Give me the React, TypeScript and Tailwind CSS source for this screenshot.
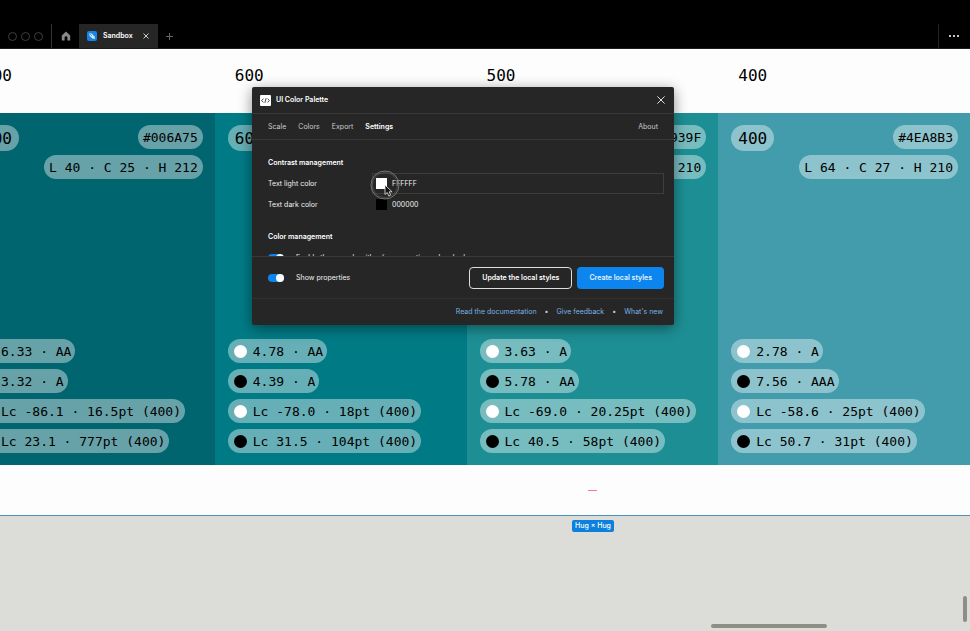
import { ReactNode } from "react";

type Shade = {
  name: string;
  hex: string;
  lch: string;
  color: string;
  wcagLight: string;
  wcagDark: string;
  apcaLight: string;
  apcaDark: string;
};

const shades: Shade[] = [
  {
    name: "700",
    hex: "#006A75",
    lch: "L 40 · C 25 · H 212",
    color: "bg-[#00656f]",
    wcagLight: "6.33 · AA",
    wcagDark: "3.32 · A",
    apcaLight: "Lc -86.1 · 16.5pt (400)",
    apcaDark: "Lc 23.1 · 777pt (400)",
  },
  {
    name: "600",
    hex: "#007F8B",
    lch: "L 48 · C 28 · H 212",
    color: "bg-[#007b86]",
    wcagLight: "4.78 · AA",
    wcagDark: "4.39 · A",
    apcaLight: "Lc -78.0 · 18pt (400)",
    apcaDark: "Lc 31.5 · 104pt (400)",
  },
  {
    name: "500",
    hex: "#18939F",
    lch: "L 56 · C 29 · H 210",
    color: "bg-[#1d8f94]",
    wcagLight: "3.63 · A",
    wcagDark: "5.78 · AA",
    apcaLight: "Lc -69.0 · 20.25pt (400)",
    apcaDark: "Lc 40.5 · 58pt (400)",
  },
  {
    name: "400",
    hex: "#4EA8B3",
    lch: "L 64 · C 27 · H 210",
    color: "bg-[#429cab]",
    wcagLight: "2.78 · A",
    wcagDark: "7.56 · AAA",
    apcaLight: "Lc -58.6 · 25pt (400)",
    apcaDark: "Lc 50.7 · 31pt (400)",
  },
];

function Pill({ dot, children }: { dot?: "light" | "dark"; children: ReactNode }) {
  return (
    <div className={`flex h-6 items-center gap-1.5 rounded-full bg-white/40 text-[13px] leading-6 whitespace-pre ${dot ? "pr-1 pl-1.5" : "px-[5px]"}`}>
      {dot && (
        <span className={`size-[13px] rounded-full ${dot === "light" ? "bg-white" : "bg-black"}`} />
      )}
      <span className="pt-0.5">{children}</span>
    </div>
  );
}

function ShadeColumn({ shade }: { shade: Shade }) {
  return (
    <section className="min-w-0">
      <h2 className="h-16 bg-[#fdfdfd] px-5 pt-4 text-base leading-[22px]">{shade.name}</h2>
      <div className={`flex h-[352px] flex-col justify-between p-3 pl-[13px] ${shade.color}`}>
        <div className="flex items-start justify-between">
          <div className="h-[26px] rounded-full bg-white/40 px-[7px] text-base leading-7">{shade.name}</div>
          <div className="-ml-8 flex flex-col items-end gap-1.5">
            <Pill>{shade.hex}</Pill>
            <Pill>{shade.lch}</Pill>
          </div>
        </div>
        <div className="flex flex-col items-start gap-1.5">
          <Pill dot="light">{shade.wcagLight}</Pill>
          <Pill dot="dark">{shade.wcagDark}</Pill>
          <Pill dot="light">{shade.apcaLight}</Pill>
          <Pill dot="dark">{shade.apcaDark}</Pill>
        </div>
      </div>
    </section>
  );
}

function TitleBar() {
  return (
    <header className="flex h-[49px] items-end border-b border-[#1c1c1c] bg-black text-[#e8e8e8]">
      <div className="flex h-6 w-[51px] items-center gap-1 pl-2">
        <span className="size-[9px] rounded-full border border-[#3f3f3c]" />
        <span className="size-[9px] rounded-full border border-[#3f3f3c]" />
        <span className="size-[9px] rounded-full border border-[#3f3f3c]" />
      </div>
      <button aria-label="Home" className="flex h-6 w-7 items-center justify-center border-l border-[#333]">
        <svg width="10" height="10" viewBox="0 0 10 10" fill="#8a8a8a">
          <path d="M5 0.5 9.2 4.4V9.5H6.4V6.6a1.4 1.4 0 0 0-2.8 0V9.5H0.8V4.4z" />
        </svg>
      </button>
      <div className="flex h-6 w-[79px] items-center bg-[#262626] pl-2">
        <svg className="shrink-0" width="10" height="10" viewBox="0 0 10 10" fill="none">
          <rect width="10" height="10" rx="2" fill="#1683e8" />
          <path d="M2 2l3 .7 2.6 2.8L8 8 5.4 7.6 2.7 5z" fill="#cfe6fb" />
          <path d="M2.4 2.4 5 5" stroke="#1683e8" strokeWidth=".7" />
        </svg>
        <span className="ml-1.5 text-[7px] font-semibold text-white">Sandbox</span>
        <button aria-label="Close tab" className="ml-auto flex h-6 w-[27px] shrink-0 items-center justify-center">
          <svg width="6" height="6" viewBox="0 0 6 6" stroke="#d0d0d0">
            <path d="M.5.5l5 5M5.5.5l-5 5" />
          </svg>
        </button>
      </div>
      <button aria-label="New tab" className="flex h-6 w-[22px] items-center justify-center">
        <svg width="7" height="7" viewBox="0 0 7 7" stroke="#666">
          <path d="M3.5 0v7M0 3.5h7" />
        </svg>
      </button>
      <button aria-label="More" className="ml-auto flex h-6 w-8 items-center justify-center border-l border-[#222] pr-0.5">
        <svg width="10" height="2" viewBox="0 0 10 2" fill="#c4c4c4">
          <path d="M0 0h2v2H0zM4 0h2v2H4zM8 0h2v2H8z" />
        </svg>
      </button>
    </header>
  );
}

function Toggle({ id }: { id: string }) {
  return (
    <input
      id={id}
      type="checkbox"
      defaultChecked
      className="flex h-2 w-4 shrink-0 appearance-none justify-end rounded-full bg-[#0c86ee] before:size-2 before:rounded-full before:bg-white"
    />
  );
}

function ColorRow({ id, label, value, swatch, active }: { id: string; label: string; value: string; swatch: string; active?: boolean }) {
  return (
    <div className="flex h-[21px] items-center">
      <label htmlFor={id} className="w-[104px]">{label}</label>
      <div className={`flex h-[21px] flex-1 items-center gap-[5px] border pl-[3px] ${active ? "border-[#3d3d3b]" : "border-transparent"}`}>
        <span className={`size-[11px] ${swatch}`} />
        <input id={id} defaultValue={value} className="w-20 bg-transparent outline-none" />
      </div>
    </div>
  );
}

function PluginWindow() {
  return (
    <div
      role="dialog"
      aria-label="UI Color Palette"
      className="absolute top-[87px] left-[252px] w-[422px] rounded-xs bg-[#262626] font-['Inter',sans-serif] text-[7px] leading-3 text-[#f0f0f0] shadow-[0_3px_14px_rgba(0,0,0,0.45)]"
    >
      <div className="flex h-[27px] items-center border-b border-[#383838] px-2 font-semibold text-white">
        <svg width="11" height="11" viewBox="0 0 11 11" fill="none">
          <rect width="11" height="11" rx="1" fill="#fff" />
          <path d="M3.4 3.6 1.7 5.5l1.7 1.9M7.6 3.6l1.7 1.9-1.7 1.9M6.1 3.2 4.9 7.8" stroke="#333" strokeWidth=".9" />
        </svg>
        <h1 className="ml-[5px]">UI Color Palette</h1>
        <button aria-label="Close" className="ml-auto flex size-[11px] items-center justify-center">
          <svg width="8" height="8" viewBox="0 0 8 8" stroke="#e0e0e0">
            <path d="M.4.4l7.2 7.2M7.6.4.4 7.6" />
          </svg>
        </button>
      </div>
      <nav className="flex h-[26px] items-center gap-3 border-b border-[#383838] pr-4 pl-4 text-[#cacaca]">
        <button>Scale</button>
        <button>Colors</button>
        <button>Export</button>
        <button className="font-semibold text-white">Settings</button>
        <button className="ml-auto">About</button>
      </nav>
      <div className="h-[116px] overflow-hidden pt-3 pr-[10px] pl-4">
        <h2 className="leading-[21px] font-semibold text-white">Contrast management</h2>
        <ColorRow id="light" label="Text light color" value="FFFFFF" swatch="bg-white" active />
        <ColorRow id="dark" label="Text dark color" value="000000" swatch="bg-black" />
        <h2 className="mt-[11px] leading-[21px] font-semibold text-white">Color management</h2>
        <div className="flex h-[21px] items-center gap-3">
          <Toggle id="algorithm" />
          <label htmlFor="algorithm">Enable the new algorithm for generating color shades</label>
        </div>
      </div>
      <div className="flex h-[42px] items-center gap-[5px] border-t border-[#383838] pr-[10px] pl-4">
        <Toggle id="properties" />
        <label htmlFor="properties" className="ml-[7px]">Show properties</label>
        <button className="ml-auto h-[22px] rounded border border-[#dedede] px-3 font-semibold text-white">Update the local styles</button>
        <button className="h-[22px] rounded bg-[#0c86ee] px-3 font-semibold text-[#e4f1fd]">Create local styles</button>
      </div>
      <div className="flex h-[27px] items-center justify-end gap-2 border-t border-[#303030] pr-[11px] text-[#78b2e4]">
        <a href="#docs">Read the documentation</a>
        <span className="text-[#ccc]">•</span>
        <a href="#feedback">Give feedback</a>
        <span className="text-[#ccc]">•</span>
        <a href="#news">What's new</a>
      </div>
      <svg className="pointer-events-none absolute top-[83px] left-[118px]" width="30" height="30" viewBox="0 0 30 30" fill="none">
        <circle cx="15" cy="15" r="14" stroke="#777770" />
        <circle cx="15" cy="15" r="12.5" stroke="#55554f" strokeWidth=".7" />
        <path d="M15 15v9.5l2.3-2 1.5 3.4 1.8-.8-1.5-3.3h3z" fill="#111" stroke="#eee" strokeWidth=".8" />
      </svg>
    </div>
  );
}

export default function App() {
  return (
    <div className="relative flex min-h-screen flex-col overflow-hidden bg-[#dcdcd8] font-['Inter',sans-serif] text-black">
      <TitleBar />
      <main className="flex flex-1 flex-col">
        <div className="-ml-[37px] grid grid-cols-4 font-['DejaVu_Sans_Mono',monospace] text-black">
          {shades.map((shade) => (
            <ShadeColumn key={shade.name} shade={shade} />
          ))}
        </div>
        <div className="h-[51px] border-b border-[#4a8fc4] bg-[#fdfdfd]" />
        <div className="flex-1" />
      </main>
      <span className="absolute top-[490px] left-[588px] h-px w-[9px] bg-[#f56fc0]" />
      <span className="absolute top-[520px] left-[572px] rounded-xs bg-[#0c80dc] px-[3px] text-[7px] leading-3 font-medium text-white">Hug × Hug</span>
      <PluginWindow />
      <span className="absolute right-[143px] bottom-[3px] h-1 w-[116px] rounded-full bg-[#8e8e84]" />
      <span className="absolute right-[3px] bottom-[9px] h-[26px] w-1 rounded-full bg-[#8e8e84]" />
    </div>
  );
}
